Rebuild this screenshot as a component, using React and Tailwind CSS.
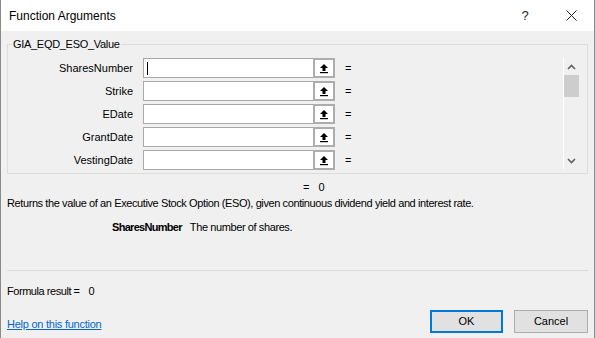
import React from "react";

const args = ["SharesNumber", "Strike", "EDate", "GrantDate", "VestingDate"];

const RefIcon = () => (
  <svg width="10" height="11" viewBox="0 0 10 11">
    <path d="M5 1 L9 5 L6.5 5 L6.5 8 L3.5 8 L3.5 5 L1 5 Z" fill="#000" />
    <rect x="1" y="9" width="8" height="1.2" fill="#000" />
  </svg>
);

const ArgRow = ({ name, focused }) => (
  <div className="flex items-center h-[20px]">
    <div className="w-[126px] text-right text-[11px] text-black pr-[1px]">{name}</div>
    <div className="ml-[9px] flex h-[20px] w-[192px] border border-[#a9a9a9] bg-white">
      <div className="flex-1 flex items-center pl-[3px]">
        {focused && <div className="w-[1px] h-[13px] bg-black" />}
      </div>
      <div className="w-[22px] border-2 border-[#adadad] bg-white flex items-center justify-center -my-[1px] -mr-[1px] h-[20px]">
        <RefIcon />
      </div>
    </div>
    <div className="ml-[10px] text-[11px] text-black">=</div>
  </div>
);

const ScrollBar = () => (
  <div className="w-[16px] h-[111px] border-l border-white bg-[#f0f0f0] flex flex-col items-center">
    <div className="h-[17px] flex items-center justify-center">
      <svg width="9" height="6" viewBox="0 0 9 6">
        <path d="M1 5 L4.5 1.5 L8 5" stroke="#606060" strokeWidth="1.6" fill="none" />
      </svg>
    </div>
    <div className="w-[15px] h-[22px] bg-[#cdcdcd]" />
    <div className="flex-1" />
    <div className="h-[17px] flex items-center justify-center">
      <svg width="9" height="6" viewBox="0 0 9 6">
        <path d="M1 1 L4.5 4.5 L8 1" stroke="#606060" strokeWidth="1.6" fill="none" />
      </svg>
    </div>
  </div>
);

export default function App() {
  return (
    <div
      className="w-[595px] h-[338px] bg-[#f0f0f0] border-l border-r border-[#8a8a8a] flex flex-col text-black overflow-hidden"
      style={{ fontFamily: '"Liberation Sans", Arial, sans-serif' }}
    >
      <div className="h-[31px] bg-white flex items-center shrink-0">
        <div className="pl-[8px] text-[12px] flex-1">Function Arguments</div>
        <div className="w-[46px] flex justify-center text-[13px] text-[#222]">?</div>
        <div className="w-[46px] flex justify-center">
          <svg width="11" height="11" viewBox="0 0 11 11">
            <path d="M0.5 0.5 L10.5 10.5 M10.5 0.5 L0.5 10.5" stroke="#222" strokeWidth="1" />
          </svg>
        </div>
      </div>

      <div className="px-[6px]">
        <fieldset className="mt-[5px] border border-[#dcdcdc] h-[138px]">
          <legend className="ml-[4px] px-[1px] text-[11px] tracking-[-0.3px] leading-[16px]">GIA_EQD_ESO_Value</legend>
          <div className="flex pt-[6px]">
            <div className="flex flex-col gap-[3px]">
              {args.map((a, i) => (
                <ArgRow key={a} name={a} focused={i === 0} />
              ))}
            </div>
            <div className="flex-1" />
            <div className="mr-[8px]">
              <ScrollBar />
            </div>
          </div>
        </fieldset>

        <div className="flex h-[16px] items-center mt-[5px] text-[11px]">
          <span className="ml-[296px]">=</span>
          <span className="ml-[9px]">0</span>
        </div>
        <div className="h-[16px] flex items-center text-[11px] tracking-[-0.4px]">
          Returns the value of an Executive Stock Option (ESO), given continuous dividend yield and interest rate.
        </div>
        <div className="mt-[8px] h-[16px] flex items-center text-[11px]">
          <span className="ml-[105px] font-bold tracking-[-0.7px]">SharesNumber</span>
          <span className="ml-[8px] tracking-[-0.4px]">The number of shares.</span>
        </div>

        <div className="mt-[35px] border-t border-[#dadada]" />

        <div className="mt-[12px] h-[16px] flex items-center text-[11px]">
          <span className="tracking-[-0.45px]">Formula result =</span>
          <span className="ml-[9px]">0</span>
        </div>

        <div className="mt-[9px] flex items-center">
          <div className="flex-1 pt-[3px]">
            <a className="text-[11px] text-[#0066cc] underline tracking-[-0.25px]" href="#">
              Help on this function
            </a>
          </div>
          <button className="w-[73px] h-[23px] bg-[#e1e1e1] border-2 border-[#0078d7] text-[11px]">OK</button>
          <button className="ml-[11px] w-[74px] h-[23px] bg-[#e1e1e1] border border-[#adadad] text-[11px]">Cancel</button>
        </div>
      </div>
    </div>
  );
}
